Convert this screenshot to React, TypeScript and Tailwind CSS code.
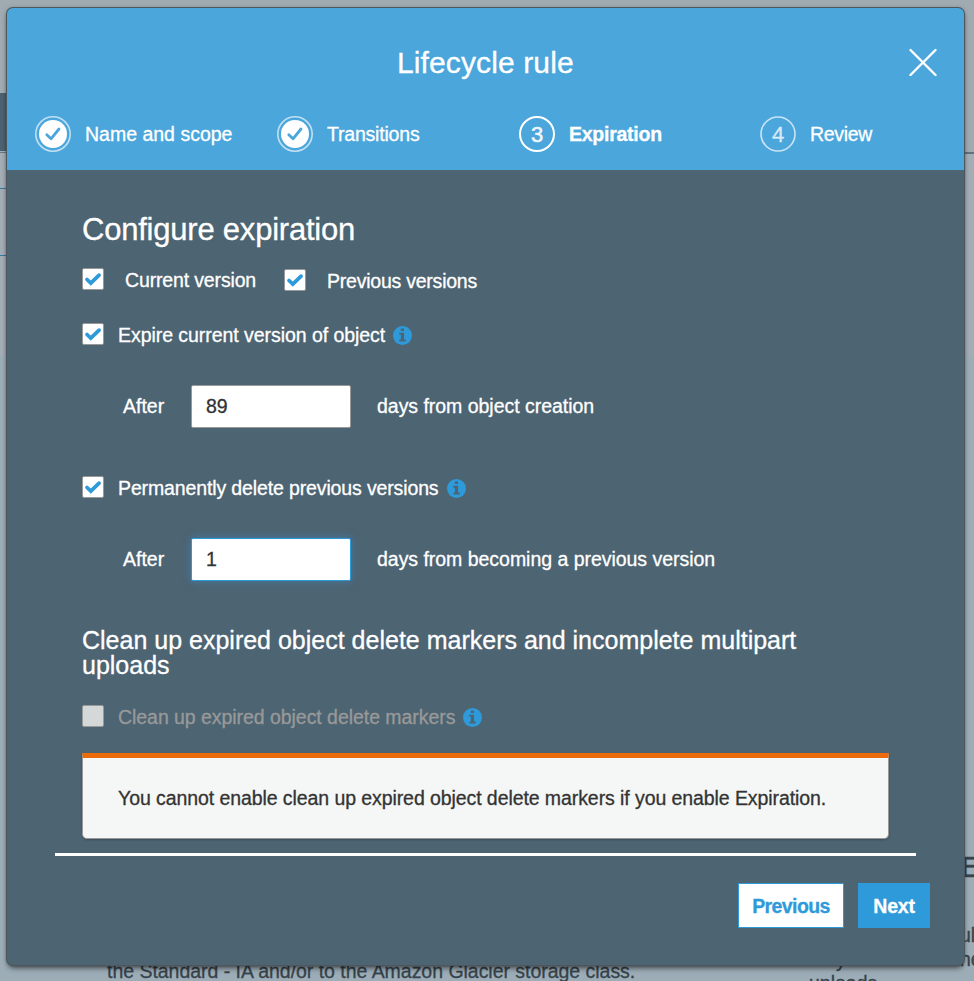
import type { ReactNode } from "react";

function StepBadge({ state, n }: { state: "done" | "current" | "next"; n: number }) {
  return (
    <svg className="-mt-0.5 h-9 w-9 shrink-0" viewBox="0 0 36 36" fill="none">
      {state === "done" && (
        <>
          <circle cx="18" cy="18" r="17.2" stroke="#fff" strokeOpacity="0.65" strokeWidth="1.6" />
          <circle cx="18" cy="18" r="14" fill="#fff" />
          <path d="M11.8 18.8l4.2 4 8-9.8" stroke="#4ba6dc" strokeWidth="2.8" strokeLinecap="round" strokeLinejoin="round" />
        </>
      )}
      {state !== "done" && (
        <>
          <circle cx="18" cy="18" r="17" stroke="#fff" strokeOpacity={state === "current" ? 1 : 0.7} strokeWidth={state === "current" ? 2 : 1.6} />
          <text x="18" y="26" textAnchor="middle" fontSize="22" fill="#fff" fillOpacity={state === "current" ? 0.9 : 0.75} stroke="#fff" strokeWidth={state === "current" ? 0.7 : 0.3} strokeOpacity="0.75">
            {n}
          </text>
        </>
      )}
    </svg>
  );
}

function Check({ on = true }: { on?: boolean }) {
  return (
    <span className={"block h-[22px] w-[22px] shrink-0 rounded-[2px] border border-[#999] " + (on ? "bg-white" : "bg-[#d5d8d8]")}>
      {on && (
        <svg viewBox="0 0 20 20" className="h-5 w-5" fill="none">
          <path d="M4 10.5l3.8 3.6 8.3-8" stroke="#2e9ada" strokeWidth="3.7" strokeLinecap="round" />
        </svg>
      )}
    </span>
  );
}

function Info() {
  return (
    <svg viewBox="0 0 18 18" className="h-[19px] w-[19px] shrink-0">
      <circle cx="9" cy="9" r="9" fill="#2e9ada" />
      <path d="M7.4 2.4h3v2.4h-3zM6 6.4h4.5v6.4H12v2H6v-2h1.5V8.3H6z" fill="#4d6472" />
    </svg>
  );
}

function Days({ value, focused, children }: { value: string; focused?: boolean; children: ReactNode }) {
  return (
    <div className="flex h-[43px] items-center">
      <span className="ml-[41px] w-[68px]">After</span>
      <span
        className={
          "flex h-[43px] w-40 items-center rounded-[2px] border bg-white pl-3.5 text-[#333] " +
          (focused ? "border-[#2e9ada] shadow-[0_0_8px_rgba(60,140,200,0.6)]" : "border-[#999]")
        }
      >
        {value}
      </span>
      <span className="ml-[26px] tracking-[-0.03px]">{children}</span>
    </div>
  );
}

export default function App() {
  return (
    <div className="relative h-[981px] w-[974px] overflow-hidden bg-[#9dadb7] font-['Liberation_Sans',Arial,sans-serif] text-[19.5px] whitespace-nowrap text-[#36434b] [-webkit-text-stroke:0.3px]">
      <div className="h-[93px] bg-[#9fabb1]" />
      <div className="flex h-[263px] justify-between bg-[#a2adb5]">
        <div className="w-[20px]">
          <div className="h-[58px] bg-[#4c6270]" />
          <div className="mt-px h-px bg-[#657984]" />
          <div className="mt-[35px] h-px bg-[#35789f]" />
          <div className="mt-[66px] h-px bg-[#35789f]" />
        </div>
        <div className="w-[20px]">
          <div className="h-[59px] bg-[#9fabb1]" />
          <div className="h-[2px] bg-[#5f727d]" />
        </div>
      </div>
      <div className="absolute top-[960px] left-[107px] leading-[22px] tracking-[-0.03px]">the Standard - IA and/or to the Amazon Glacier storage class.</div>
      <div className="absolute top-[850px] left-[961px] text-[30px] leading-[34px]">E</div>
      <div className="absolute top-[923px] left-[960px] leading-[24px]">ul<br />he</div>
      <div className="absolute top-[949px] left-[809px] leading-[23px]">&nbsp; &nbsp; &nbsp;y<br />uploads</div>

      <div className="absolute top-2 left-[7px] h-[957px] w-[957px] rounded-[6px] bg-[#4d6472] text-white shadow-[0_0_0_1px_#4c565c,0_1px_4px_rgba(0,0,0,0.5),0_5px_6px_-2px_rgba(0,0,0,0.45)]">
        <header className="h-[162px] rounded-t-[6px] bg-[#4ba6dc] pt-[34px]">
          <div className="flex h-10 items-center pr-[27px] pl-[390px]">
            <h1 className="text-[30px] tracking-[0.12px]">Lifecycle rule</h1>
            <svg className="ml-auto h-7 w-7" viewBox="0 0 28 28" stroke="#fff" strokeWidth="2.4" strokeLinecap="round">
              <path d="M1.5 2l25 25M26.5 2l-25 25" />
            </svg>
          </div>
          <nav className="mt-[33px] flex h-10 items-center pl-7">
            <div className="flex w-[242px] items-center gap-3.5"><StepBadge state="done" n={1} /><span>Name and scope</span></div>
            <div className="flex w-[242px] items-center gap-3.5"><StepBadge state="done" n={2} /><span className="tracking-[-0.2px]">Transitions</span></div>
            <div className="flex w-[241px] items-center gap-3.5"><StepBadge state="current" n={3} /><b className="tracking-[-0.25px]">Expiration</b></div>
            <div className="flex items-center gap-3.5"><StepBadge state="next" n={4} /><span className="tracking-[-0.3px]">Review</span></div>
          </nav>
        </header>
        <main className="pl-[75px]">
          <h2 className="pt-[42px] text-[31px] leading-9 tracking-[-0.22px]">Configure expiration</h2>
          <div className="mt-5 flex h-[26px] items-start leading-6">
            <Check />
            <span className="ml-[21px] w-[159px] tracking-[-0.15px]">Current version</span>
            <span className="mt-px"><Check /></span>
            <span className="mt-px ml-[21px] tracking-[-0.23px]">Previous versions</span>
          </div>
          <div className="mt-[29px] flex h-6 items-center leading-6">
            <span className="-mt-0.5"><Check /></span>
            <span className="mr-2 ml-3.5 tracking-[-0.05px]">Expire current version of object</span>
            <Info />
          </div>
          <div className="mt-[38px]"><Days value="89">days from object creation</Days></div>
          <div className="mt-12 flex h-6 items-center leading-6">
            <span className="-mt-0.5"><Check /></span>
            <span className="mr-2 ml-3.5 tracking-[-0.13px]">Permanently delete previous versions</span>
            <Info />
          </div>
          <div className="mt-[38px]"><Days value="1" focused>days from becoming a previous version</Days></div>
          <h3 className="mt-[47px] text-[25px] leading-[25px]">
            Clean up expired object delete markers and incomplete multipart<br />uploads
          </h3>
          <div className="mt-[27px] flex h-6 items-center leading-6 text-[#999]">
            <span className="-mt-0.5"><Check on={false} /></span>
            <span className="mr-2 ml-3.5 tracking-[-0.05px]">Clean up expired object delete markers</span>
            <Info />
          </div>
          <div className="mt-6 flex h-[86px] w-[807px] items-center rounded-b-[5px] border border-t-[5px] border-[#999] border-t-[#eb6b0a] bg-[#f5f7f6] pt-0.5 pl-[35px] tracking-[-0.08px] text-[#333] shadow-[0_1px_2px_rgba(0,0,0,0.25)]">
            You cannot enable clean up expired object delete markers if you enable Expiration.
          </div>
        </main>
        <footer>
          <div className="mt-3.5 ml-12 h-[3px] w-[861px] bg-white" />
          <div className="mt-[27px] mr-[34px] flex justify-end gap-3.5 font-bold">
            <button className="h-[45px] w-[106px] border border-[#2e9ada] bg-white pt-0.5 tracking-[-0.6px] text-[#2e9ada]">Previous</button>
            <button className="h-[45px] w-[72px] bg-[#2e9ada] pt-0.5 tracking-[-0.2px] text-white">Next</button>
          </div>
        </footer>
      </div>
    </div>
  );
}
